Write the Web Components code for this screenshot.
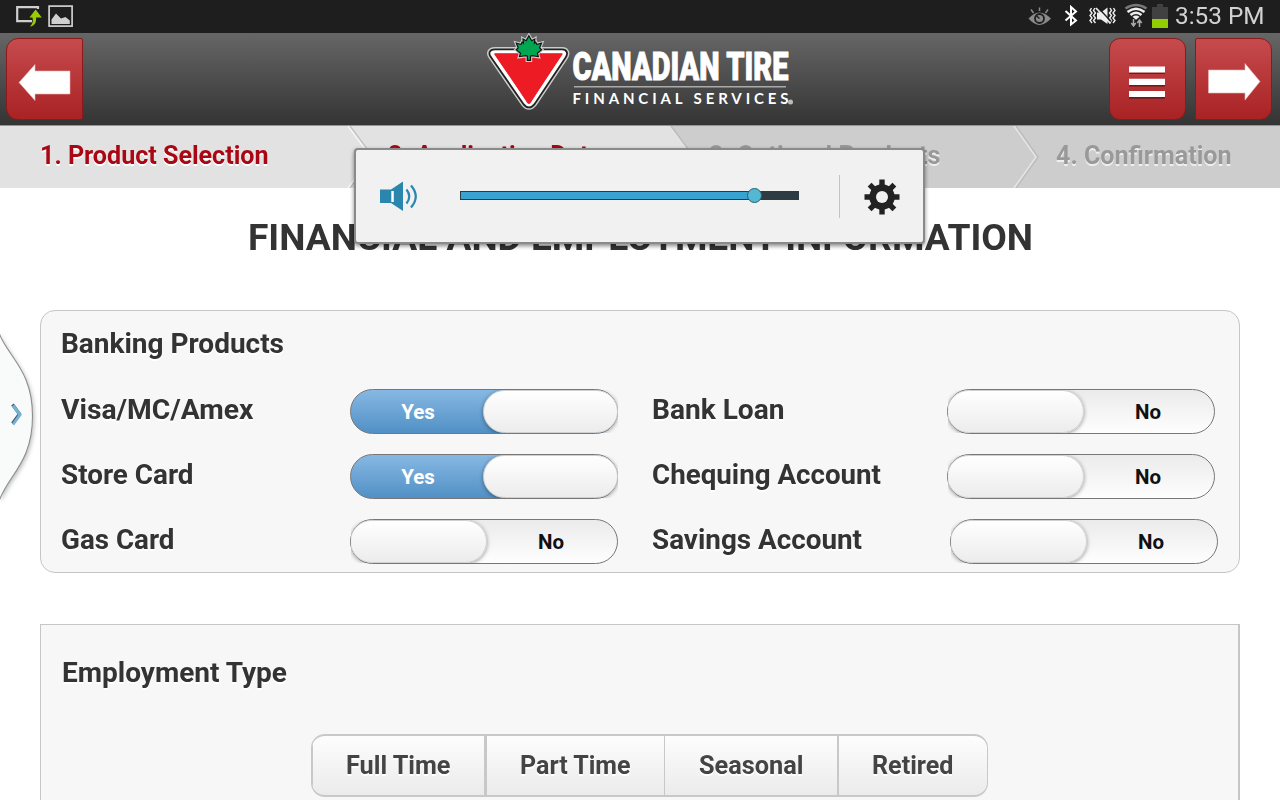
<!DOCTYPE html>
<html lang="en">
<head>
<meta charset="utf-8">
<title>Financial and Employment Information</title>
<style>
html,body{margin:0;height:100%;overflow:hidden;background:#fff}
body{font-family:Roboto,"Liberation Sans",sans-serif}
</style>
</head>
<body>
<ct-app></ct-app>
<script>
const define=(name,html,setup)=>customElements.define(name,class extends HTMLElement{
  connectedCallback(){
    if(this.shadowRoot)return;
    this.attachShadow({mode:'open'}).innerHTML=html;
    if(setup)setup(this,this.shadowRoot);
  }
});

/* Text set to a given advance width */
define('fit-text',`<style>:host{display:inline-block;white-space:nowrap;text-align:left}span{display:inline-block;transform-origin:0 50%}</style><span><slot></slot></span>`,(h,r)=>{
  const s=r.querySelector('span'),w=+h.getAttribute('w');
  h.style.width=w+'px';
  s.style.transform=`scaleX(${w/s.getBoundingClientRect().width})`;
});

define('status-bar',`<style>
:host{display:flex;align-items:center;justify-content:space-between;height:33px;background:#1e1e1e;color:#d2d2d2;flex:none}
svg{display:block}.r{display:flex;align-items:center}
fit-text{font-size:23.5px;line-height:33px;height:33px;margin-left:4.500px;margin-right:16px}
</style>
<svg width="80" height="33" viewBox="0 0 80 33"><path d="M38 9V7.200H17.200V21.200H32" fill="none" stroke="#cfcfcf" stroke-width="2.200"/><path d="M30 26.500C35 26 36.500 22 36 17.500H41.800L35.600 9.500 29.500 17.500H32.500C33.500 21 32.500 24 30 26.500Z" fill="#99cc00"/>
<rect x="49.100" y="6.100" width="23" height="20" fill="none" stroke="#cfcfcf" stroke-width="1.700"/><path d="M51.500 24V19.500L56 13.500 61 18.500 65.500 17 69.800 20.500V24Z" fill="#cfcfcf"/></svg>
<div class="r"><svg width="142" height="33" viewBox="1028 0 142 33">
<path d="M1028.500 18.500Q1034 12.500 1039.500 12.500T1051 18.500Q1045 25 1039.500 25T1028.500 18.500Z" fill="#8a8a8a"/><circle cx="1039.500" cy="18.500" r="4.500" fill="#8a8a8a" stroke="#1e1e1e" stroke-width="1.800"/><path d="M1039.500 18.500L1036 15.500" stroke="#1e1e1e" stroke-width="1.500"/><path d="M1039.500 7.500V11M1031 9.500L1033.500 13M1048 9.500L1045.500 13" stroke="#8a8a8a" stroke-width="1.500"/>
<path d="M1065.500 11L1076 20.500 1071 24.500V7L1076 11.500 1065.500 20.500" fill="none" stroke="#fff" stroke-width="2"/>
<path d="M1091.500 8l-1.500 2.500 2 2.500-2 2.500 2 2.500-2 2.500 2 2.500M1095 8l-1.500 2.500 2 2.500-2 2.500 2 2.500-2 2.500 2 2.500M1110 8l1.500 2.500-2 2.500 2 2.500-2 2.500 2 2.500-2 2.500M1113.500 8l1.500 2.500-2 2.500 2 2.500-2 2.500 2 2.500-2 2.500" fill="none" stroke="#eee" stroke-width="1.400"/>
<path d="M1097 12.500H1101L1107.500 7.500V24L1101 19.500H1097Z" fill="#eee"/><path d="M1097.500 7L1111 21.500" stroke="#1e1e1e" stroke-width="1.500"/><path d="M1096 8L1110.500 23.500" stroke="#eee" stroke-width="1.800"/>
<path d="M1125.500 8.500Q1136 1.500 1146.500 8.500" fill="none" stroke="#777" stroke-width="2.700"/><path d="M1127.500 12Q1136 5.500 1144.500 12M1130.500 15Q1136 10.500 1141.500 15" fill="none" stroke="#eee" stroke-width="2.600"/><path d="M1132.500 16.800Q1136 14 1139.500 16.800L1136 19.800Z" fill="#eee"/>
<path d="M1133.500 19V26M1131.300 23L1133.500 26 1135.700 23M1139.500 27V20M1137.300 23L1139.500 20 1141.700 23" fill="none" stroke="#aaa" stroke-width="1.500"/>
<path d="M1152 7H1157V4H1163V7H1168V19H1152Z" fill="#414141"/><path d="M1152 19H1168V28H1152Z" fill="#92cf00"/>
</svg><fit-text w="89.5">3:53 PM</fit-text></div>`);

define('nav-button',`<style>
:host{display:block;box-sizing:border-box;width:77px;height:82px;border:1.500px solid #8b1a1c;background:linear-gradient(#c64b4d,#a92224);border-radius:var(--r,11px)}
svg{display:block}
</style><svg width="75" height="80" viewBox="0 0 75 80"></svg>`,(h,r)=>{
  const k=h.getAttribute('icon');
  r.querySelector('svg').innerHTML={
    back:'<path d="M12 43.500L28 25.500V32H63V55H28V61.500Z" fill="#fff" stroke="#e8b5b5" stroke-width=".6"/>',
    next:'<path d="M64 42.500L49 24.500V31H12.500V54H49V61Z" fill="#fff" stroke="#e8b5b5" stroke-width=".6"/>',
    menu:'<path d="M19 34.300H55M19 46.600H55M19 58.900H55" stroke="#681c1d" stroke-width="1.600"/><path d="M19 30.500H55M19 42.800H55M19 55H55" stroke="#fff" stroke-width="6.200"/>'
  }[k];
});

define('brand-logo',`<style>:host{display:block;width:320px;height:80px}svg{display:block}text{fill:#fff}</style>
<svg width="320" height="80" viewBox="484 32.500 320 80">
<g stroke-linejoin="round"><path d="M495 51.500H562Q566 51.500 563.500 55.500L532.500 102Q529 106.500 525.500 102L493.300 55.500Q490 51.500 495 51.500Z" fill="#ccc" stroke="#ccc" stroke-width="10"/>
<path d="M495 51.500H562Q566 51.500 563.500 55.500L532.500 102Q529 106.500 525.500 102L493.300 55.500Q490 51.500 495 51.500Z" fill="#222" stroke="#222" stroke-width="7"/>
<path d="M495 51.500H562Q566 51.500 563.500 55.500L532.500 102Q529 106.500 525.500 102L493.300 55.500Q490 51.500 495 51.500Z" fill="#ed1c24" stroke="#fff" stroke-width="3.400"/></g>
<path d="M494.500 52.700H562.500L530.500 102.500Q529 104.500 527.300 102.500Z" fill="#ed1c24"/>
<g class="leaf"></g>
<text class="name" y="79.500" font-family="Roboto,sans-serif" font-weight="900" font-size="38" stroke="#fff" stroke-width=".9">CANADIAN TIRE</text>
<path d="M574 86.300H786" stroke="#aaa" stroke-width="1.500"/>
<text x="572.500" y="103.300" font-family="Lato,sans-serif" font-weight="700" font-size="15" textLength="216" lengthAdjust="spacing">FINANCIAL SERVICES</text>
<circle cx="790.500" cy="101.500" r="2.500" fill="#bbb"/>
</svg>`,(h,r)=>{
  /* The leaf is one half outline, mirrored about its stem */
  const half=[[0,36.5],[2.6,41],[5.2,39.6],[4.8,44],[6.6,42.6],[7.6,44.6],[11.6,43.6],[10,47.6],[11.8,49.2],[7.8,52.6],[8.6,55.4],[3,54.6],[1,55.2],[1,59.2]];
  const pts=[...half.map(([x,y])=>`${528.9+x},${y}`),...half.slice(1).reverse().map(([x,y])=>`${528.9-x},${y}`)].join(' ');
  r.querySelector('.leaf').innerHTML=`<polygon points="${pts}" fill="none" stroke="#ccc" stroke-width="4.600"/><polygon points="${pts}" fill="#111" stroke="#111" stroke-width="2.400"/><polygon points="${pts}" fill="#00a650"/>`;
  const t=r.querySelector('.name');
  t.setAttribute('transform',`translate(572.5 0) scale(${216/t.getComputedTextLength()} 1)`);
});

define('app-header',`<style>
:host{display:flex;justify-content:space-between;align-items:flex-start;box-sizing:border-box;height:93px;padding:0 8px 0 6px;background:linear-gradient(#666,#343434);border-bottom:1px solid #979293;flex:none}
.l,.r{width:240px;display:flex;gap:9px;padding-top:5px;box-sizing:border-box}.r{justify-content:flex-end}
brand-logo{margin-left:9px}
.b{--r:12px 2px 2px 12px}.n{--r:2px 12px 12px 2px}
</style><div class="l"><nav-button class="b" icon="back"></nav-button></div><brand-logo></brand-logo><div class="r"><nav-button icon="menu"></nav-button><nav-button class="n" icon="next"></nav-button></div>`);

define('step-item',`<style>
:host{display:block;font-weight:700;font-size:26px;line-height:58px;color:#a90713;text-shadow:0 1.500px 0 #fff}
:host([off]){color:#999;text-shadow:0 1.500px 0 #efefef}
</style><slot></slot>`);

define('step-bar',`<style>
:host{display:grid;grid-template-columns:348px 321px 347px auto;height:62px;padding-left:39.500px;position:relative;flex:none}
svg{position:absolute;left:0;top:0;z-index:-1}
</style><svg width="1280" height="62" viewBox="0 0 1280 62"><path d="M0 0H1280V62H0Z" fill="#cdcdcd"/><path d="M0 0H669L691 31 669 62H0Z" fill="#e2e2e2"/>
<g fill="none"><path d="M350 0L373 31 350 62M671 0L694 31 671 62M1016 0L1038 31 1016 62" stroke="#b5b5b5" stroke-width="1.500" opacity=".7"/><path d="M348 0L371 31 348 62" stroke="#f6f6f6" stroke-width="1.500"/><path d="M669 0L692 31 669 62M1014 0L1036 31 1014 62" stroke="#e5e5e5" stroke-width="1.500"/></g></svg>
<step-item><fit-text w="228.5">1. Product Selection</fit-text></step-item>
<step-item><fit-text w="214">2. Application Data</fit-text></step-item>
<step-item off><fit-text w="231.5">3. Optional Products</fit-text></step-item>
<step-item off><fit-text w="175.500">4. Confirmation</fit-text></step-item>`);

define('toggle-switch',`<style>
:host{display:block;box-sizing:border-box;position:relative;width:268px;height:45px;border:1px solid #777;border-radius:22.500px;background:linear-gradient(#ebebeb,#fefefe);font-size:20.500px;font-weight:700;line-height:44px;color:#111;text-align:center}
:host([on]){background:linear-gradient(#87b8e3,#5190c5);color:#fff;text-shadow:0 -2px 1px #1c5583}
.t{position:absolute;left:133px;width:134px;top:0}
:host([on]) .t{left:0}
.c{position:absolute;inset:0 -1px 0 0;overflow:hidden}
.k{position:absolute;left:-1px;top:0;width:137px;height:43px;box-sizing:border-box;border:1px solid #d0d0d0;border-radius:22px;background:linear-gradient(#fff,#ececec);box-shadow:0 1px 4px #0006}
:host([on]) .k{left:132px;width:135px}
</style><span class="t"><slot></slot></span><div class="c"><div class="k"></div></div>`);

define('banking-panel',`<style>
:host{display:block;box-sizing:border-box;width:1199.500px;height:263px;margin:0 0 51px 40px;border:1px solid #c6c6c6;border-radius:15px;background:#f7f7f7;color:#333;font-size:27.300px;font-weight:700;text-shadow:0 1.500px 0 #fff;flex:none}
h2{font-size:inherit;margin:0 0 0 20px;line-height:67px;height:67px}
.g{display:grid;grid-template-columns:289px 302px 295px 1fr;grid-auto-rows:65px;padding-left:20px;line-height:65px}
toggle-switch{margin-top:11px;text-shadow:none}.s{margin-left:3px}
</style><h2><fit-text w="223">Banking Products</fit-text></h2>
<div class="g">
<div><fit-text w="192.5">Visa/MC/Amex</fit-text></div><toggle-switch on>Yes</toggle-switch><div><fit-text w="132.5">Bank Loan</fit-text></div><toggle-switch>No</toggle-switch>
<div><fit-text w="132.5">Store Card</fit-text></div><toggle-switch on>Yes</toggle-switch><div><fit-text w="229">Chequing Account</fit-text></div><toggle-switch>No</toggle-switch>
<div><fit-text w="113.5">Gas Card</fit-text></div><toggle-switch>No</toggle-switch><div><fit-text w="210">Savings Account</fit-text></div><toggle-switch class="s">No</toggle-switch>
</div>`);

define('choice-group',`<style>
:host{display:flex;box-sizing:border-box;width:677px;height:63px;margin-left:270px;border:1.500px solid #c8c8c8;border-top-width:2px;border-bottom-width:2px;border-radius:14px;background:linear-gradient(#fdfdfd,#ebebeb);color:#444;font-size:26px;line-height:59px;overflow:hidden;text-align:center}
div{box-sizing:border-box;border-left:1px solid #c8c8c8}
div:first-child{border:0}
</style><div style="width:172px"><fit-text w="104.5">Full Time</fit-text></div><div style="width:180px;border-width:3px"><fit-text w="110.5">Part Time</fit-text></div><div style="width:173px"><fit-text w="104.5">Seasonal</fit-text></div><div style="flex:1;border-width:2px"><fit-text w="81.5">Retired</fit-text></div>`);

define('employment-panel',`<style>
:host{display:block;box-sizing:border-box;width:1200px;height:220px;margin-left:40px;border:1px solid #c6c6c6;border-right-width:2px;background:#f7f7f7;color:#333;font-size:27.300px;font-weight:700;text-shadow:0 1.500px 0 #fff;flex:none}
h2{font-size:inherit;margin:0 0 0 21px;line-height:97px;height:109px}
</style><h2><fit-text w="225">Employment Type</fit-text></h2><choice-group></choice-group>`);

define('side-drawer',`<style>:host{position:absolute;left:0;top:325px;display:block}svg{display:block;filter:drop-shadow(1px 2px 2px #0004)}</style>
<svg width="42" height="185" viewBox="0 325 42 185"><path d="M-3 326C4 356 32.500 366 32.500 416S5 476-3 507Z" fill="#f9fbfb" stroke="#8d8d8d" stroke-width="1.100"/><path d="M12.500 404.500L19.500 414 12.500 423.500" fill="none" stroke="#44525c" stroke-width="3.200"/><path d="M13 405.500L20 414.700 13 424.500" fill="none" stroke="#72b3d6" stroke-width="3"/></svg>`);

define('volume-popup',`<style>
:host{position:absolute;left:354px;top:148px;width:571px;height:96px;box-sizing:border-box;display:flex;align-items:center;padding-left:23px;background:#f1f1f1;border:2px solid #8a8a8a;border-radius:4px;box-shadow:0 2px 4px #0007}
svg{display:block}
.track{width:339px;height:9px;box-sizing:border-box;border:1px solid #2c3a43;background:linear-gradient(90deg,#38a2d1 295px,#2e3b43 295px);margin-left:41px;position:relative;top:-.5px}
.knob{position:absolute;left:286px;top:-4.500px;width:15px;height:15px;box-sizing:border-box;border:1px solid #236174;border-radius:50%;background:#54b8d2}
.div{width:1px;height:43px;background:#c4c4c4;margin:0 23.500px 0 40px}
.gear{position:relative;top:.5px}
</style><svg width="40" height="32" viewBox="379 180 40 32"><path d="M380 189.500H391L403 181.500V211L391 203H380Z" fill="#2a86ad"/><path d="M391.300 191H393.800V202H391.300Z" fill="#fff"/><path d="M406.500 189.500Q412 196.500 406.500 203.500M411 185.500Q420.500 196.500 411 207.500" fill="none" stroke="#2a86ad" stroke-width="2.200"/></svg>
<div class="track"><div class="knob"></div></div><div class="div"></div>
<svg class="gear" width="36" height="36" viewBox="-18 -18 36 36"><g fill="#222"><path d="M-2.700-17.500H2.700V17.500H-2.700Z"/><path d="M-2.700-17.500H2.700V17.500H-2.700Z" transform="rotate(45)"/><path d="M-2.700-17.500H2.700V17.500H-2.700Z" transform="rotate(90)"/><path d="M-2.700-17.500H2.700V17.500H-2.700Z" transform="rotate(135)"/><circle r="12.700"/></g><circle r="6" fill="#f1f1f1"/></svg>`);

define('ct-app',`<style>
:host{display:flex;flex-direction:column;width:1280px;height:800px;overflow:hidden;position:relative;isolation:isolate;background:#fff}
h1{margin:0 0 23px;height:99px;line-height:99px;font-size:36.600px;color:#333;text-align:center;flex:none}
</style><status-bar></status-bar><app-header></app-header><step-bar></step-bar>
<h1><fit-text w="785">FINANCIAL AND EMPLOYMENT INFORMATION</fit-text></h1>
<banking-panel></banking-panel><employment-panel></employment-panel><side-drawer></side-drawer><volume-popup></volume-popup>`);
</script>
</body>
</html>
